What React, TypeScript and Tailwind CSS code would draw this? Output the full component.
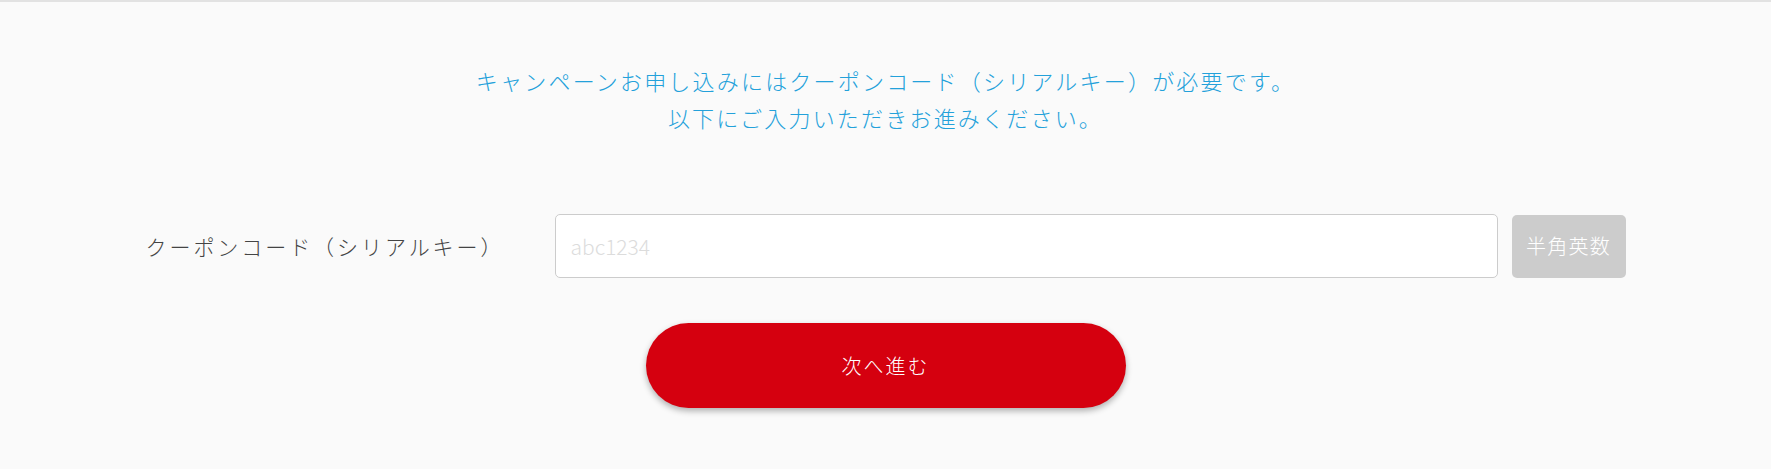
export default function App() {
  return (
    <div
      className="min-h-[469px] border-t-2 border-[#e2e2e2] bg-[#fafafa] font-light"
      style={{ fontFamily: '"Noto Sans CJK JP", "Noto Sans", sans-serif' }}
    >
      {/* Lead text */}
      <div className="pt-[60px] text-center text-[22px] leading-[37px] tracking-[0.1em] text-[#23a1da]">
        <p>キャンペーンお申し込みにはクーポンコード（シリアルキー）が必要です。</p>
        <p>以下にご入力いただきお進みください。</p>
      </div>

      {/* Coupon row */}
      <div className="mx-auto mt-[78px] flex w-[1480px] items-center">
        <label className="w-[409px] pt-[2px] text-[21px] tracking-[0.14em] text-[#444]">
          クーポンコード（シリアルキー）
        </label>
        <input
          type="text"
          placeholder="abc1234"
          className="h-[64px] flex-1 rounded-[5px] border border-[#cccccc] bg-white px-[15px] text-[21px] text-[#333] outline-none placeholder:text-[#dcdcdc]"
        />
        <button className="ml-[14px] h-[63px] w-[114px] rounded-[5px] bg-[#cccccc] text-[20px] tracking-[0.06em] text-white">
          半角英数
        </button>
      </div>

      {/* Submit */}
      <div className="mt-[45px] flex justify-center pb-[60px]">
        <button className="h-[85px] w-[480px] rounded-full bg-[#d5000f] text-[20px] tracking-[0.1em] text-white shadow-[0_3px_6px_rgba(0,0,0,0.3)]">
          次へ進む
        </button>
      </div>
    </div>
  );
}
